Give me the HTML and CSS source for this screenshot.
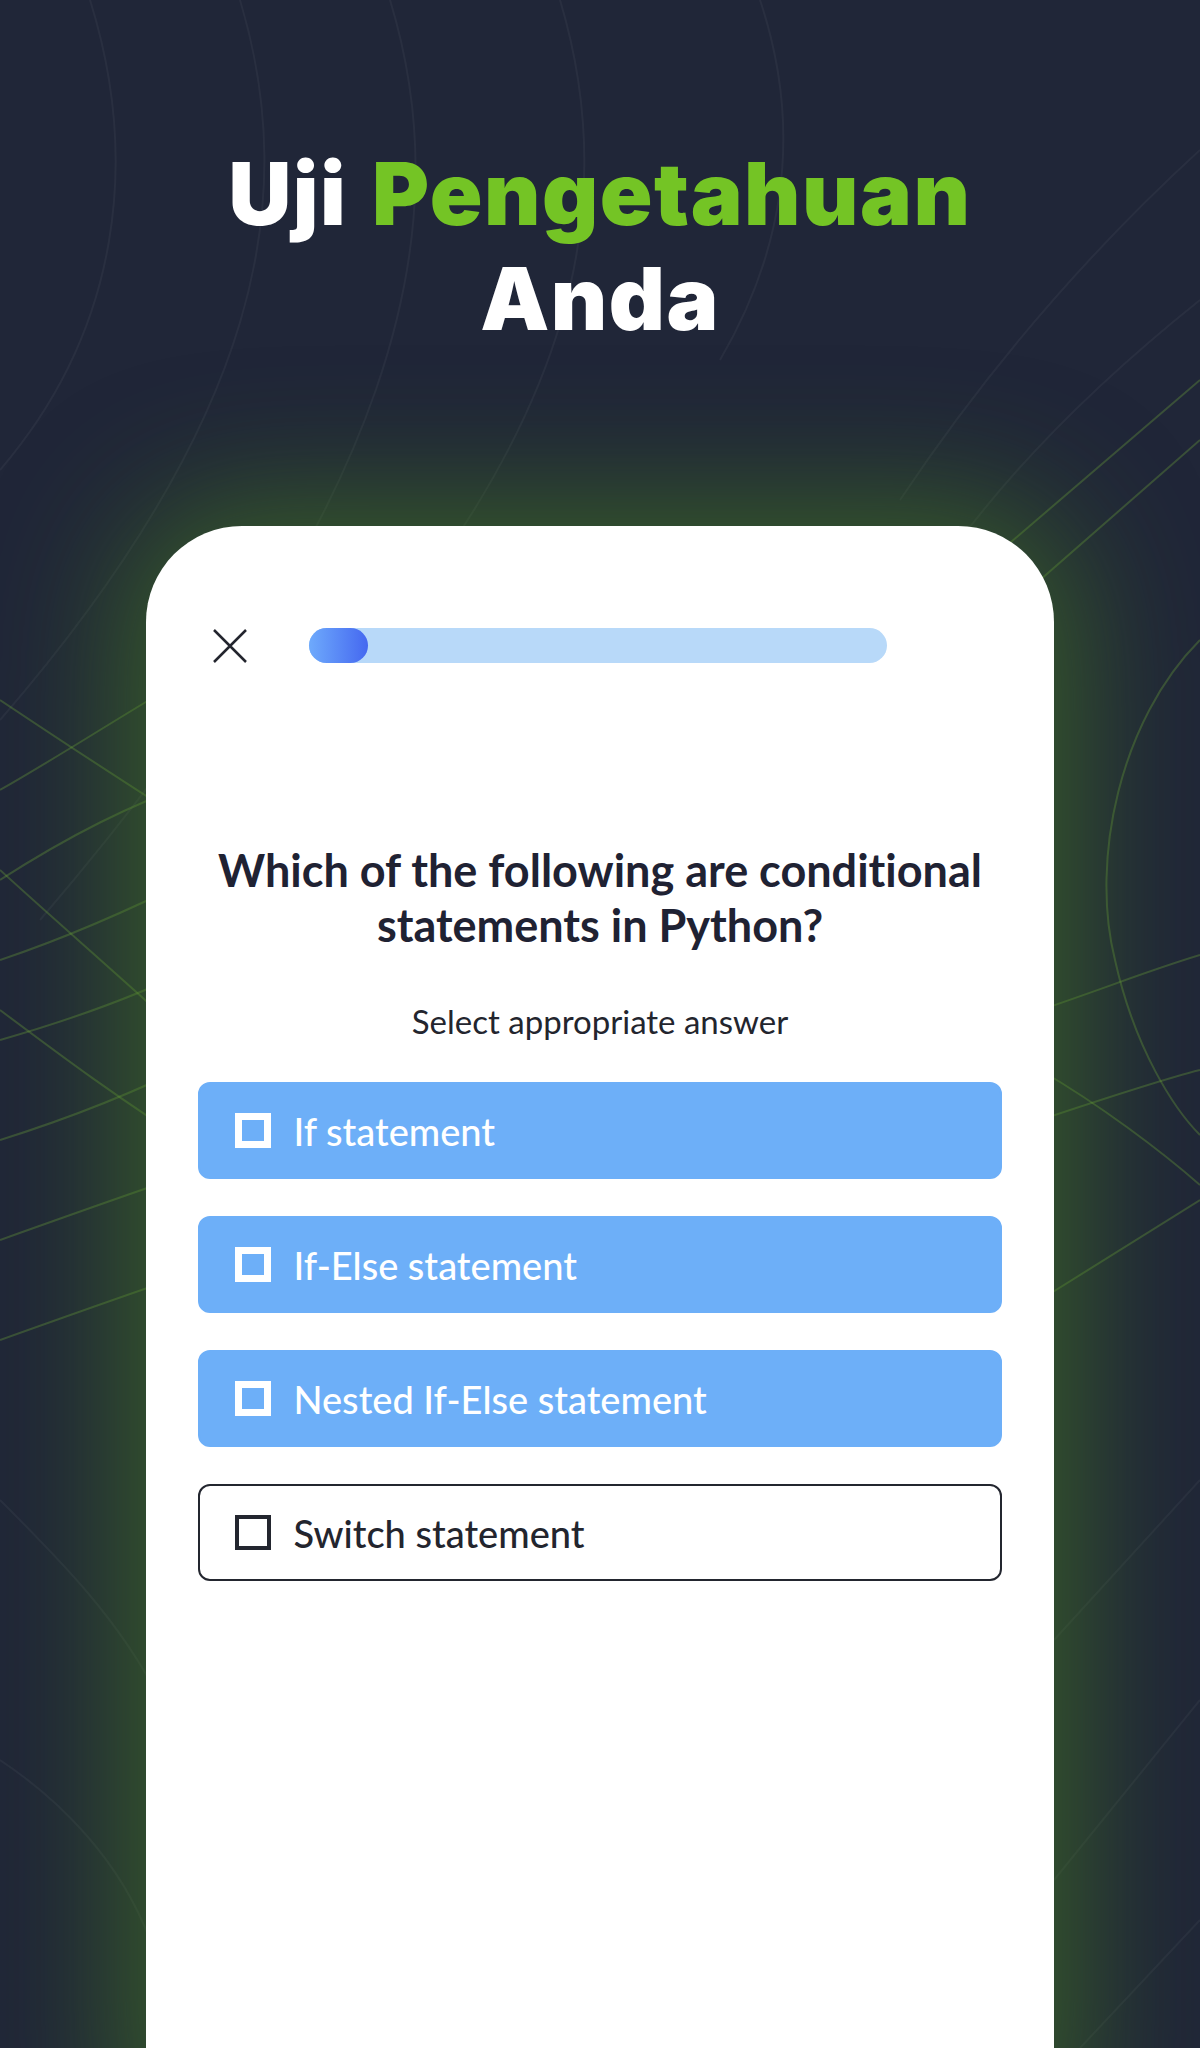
FILE: index.html
```html
<!DOCTYPE html>
<html lang="id">
<head>
<meta charset="UTF-8">
<title>Uji Pengetahuan Anda</title>
<link rel="stylesheet" href="styles.css">
</head>
<body>
<div class="screen">
  <!-- garis dekorasi latar -->
  <svg class="bg-lines" viewBox="0 0 1200 2048" fill="none">
    <g class="lines-dim">
      <path d="M90 0C140 160 120 330 0 470"/>
      <path d="M240 0C300 200 260 420 0 720"/>
      <path d="M390 0C460 230 400 500 40 920"/>
      <path d="M560 0C620 200 580 420 330 700"/>
      <path d="M760 0C800 120 790 240 720 360"/>
      <path d="M1200 150C1080 260 980 380 900 500"/>
      <path d="M1200 300C1100 380 1020 460 960 540"/>
      <path d="M1200 1480L1054 1640"/>
      <path d="M1200 1700L1054 1880"/>
      <path d="M1200 1920L1080 2048"/>
      <path d="M0 1500C60 1560 120 1620 160 1700"/>
      <path d="M0 1760C60 1800 120 1860 150 1940"/>
    </g>
    <g class="lines-glow">
      <path d="M0 700C60 740 120 780 200 830"/>
      <path d="M0 790C70 750 130 710 200 670"/>
      <path d="M0 880C70 835 130 805 200 780"/>
      <path d="M0 960C60 940 120 915 200 875"/>
      <path d="M0 1040C70 1020 140 995 200 965"/>
      <path d="M0 1140C80 1115 140 1090 200 1060"/>
      <path d="M0 1240C70 1215 140 1190 200 1170"/>
      <path d="M0 1340C70 1315 140 1290 200 1270"/>
      <path d="M0 870C60 925 130 985 200 1050"/>
      <path d="M0 1010C60 1055 120 1100 200 1150"/>
      <path d="M1200 640C1120 720 1090 860 1115 960C1135 1050 1175 1110 1200 1135"/>
      <path d="M1040 1010C1100 990 1150 970 1200 955"/>
      <path d="M1040 1120C1100 1100 1160 1080 1200 1070"/>
      <path d="M1040 1070C1100 1105 1160 1150 1200 1185"/>
      <path d="M1040 580L1200 440"/>
      <path d="M990 560L1200 380"/>
      <path d="M1040 1300L1200 1200"/>
    </g>
  </svg>

  <h1 class="headline">Uji <span class="accent">Pengetahuan</span><br>Anda</h1>

  <div class="phone">
    <div class="quiz-top">
      <svg class="close" viewBox="0 0 34 34" fill="none">
        <path d="M1 1L33 33M33 1L1 33"/>
      </svg>
      <div class="progress">
        <div class="progress-fill" style="width:59px"></div>
      </div>
    </div>

    <h2 class="question">Which of the following are conditional<br>statements in Python?</h2>
    <p class="hint">Select appropriate answer</p>

    <ul class="answers">
      <li class="answer picked"><span class="box"></span>If statement</li>
      <li class="answer picked"><span class="box"></span>If-Else statement</li>
      <li class="answer picked"><span class="box"></span>Nested If-Else statement</li>
      <li class="answer"><span class="box"></span>Switch statement</li>
    </ul>
  </div>
</div>
</body>
</html>
```

FILE: styles.css
```css
* { margin: 0; padding: 0; box-sizing: border-box; }

body {
  background: #202638;
  font-family: Lato, "Noto Sans", sans-serif;
  font-variant-ligatures: none;
}

.screen {
  position: relative;
  height: 2048px;
  overflow: hidden;
  background: #202638;
}

/* dekorasi */
.bg-lines {
  position: absolute;
  left: 0;
  top: 0;
  width: 1200px;
  height: 2048px;
}
.lines-dim path { stroke: rgba(255,255,255,.045); stroke-width: 2; }
.lines-glow path { stroke: rgba(118,178,60,.3); stroke-width: 2; }

/* judul */
.headline {
  position: relative;
  margin-top: 141px;
  text-align: center;
  font-family: Inter, "Liberation Sans", sans-serif;
  font-weight: 900;
  font-size: 87px;
  line-height: 105px;
  letter-spacing: 1.5px;
  word-spacing: 6px;
  color: #fff;
}
.accent { color: #74c425; }

/* kartu ponsel */
.phone {
  position: relative;
  margin: 175px 146px 0;
  height: 1600px;
  padding: 102px 52px 0;
  background: #fff;
  border-radius: 96px 96px 0 0;
  box-shadow: 0 0 130px 25px rgba(72,130,32,.6);
}

.quiz-top {
  display: flex;
  align-items: center;
  gap: 62px;
  padding-left: 15px;
}
.close { width: 34px; height: 34px; flex: none; }
.close path { stroke: #23252e; stroke-width: 2.5; }

.progress {
  width: 578px;
  height: 35px;
  border-radius: 18px;
  background: #b8d9f9;
}
.progress-fill {
  height: 35px;
  border-radius: 18px;
  background: linear-gradient(90deg, #6eaafc, #4568f0);
}

.question {
  margin-top: 180px;
  text-align: center;
  font-size: 45px;
  line-height: 55px;
  font-weight: 700;
  color: #1f2233;
}
.hint {
  margin-top: 48px;
  text-align: center;
  font-size: 33px;
  line-height: 40px;
  color: #23252e;
}

/* pilihan jawaban */
.answers {
  list-style: none;
  margin-top: 41px;
  display: flex;
  flex-direction: column;
  gap: 37px;
}
.answer {
  display: flex;
  align-items: center;
  gap: 23px;
  height: 97px;
  padding-left: 34.5px;
  border: 2.5px solid #23262f;
  border-radius: 12px;
  font-size: 38px;
  font-weight: 500;
  color: #23252e;
}
.answer .box {
  width: 36px;
  height: 35px;
  border: 4px solid #23262f;
  flex: none;
}
.answer.picked {
  background: #6daff8;
  border-color: #6daff8;
  color: #fff;
}
.answer.picked .box { border: 7px solid #fff; }
```
